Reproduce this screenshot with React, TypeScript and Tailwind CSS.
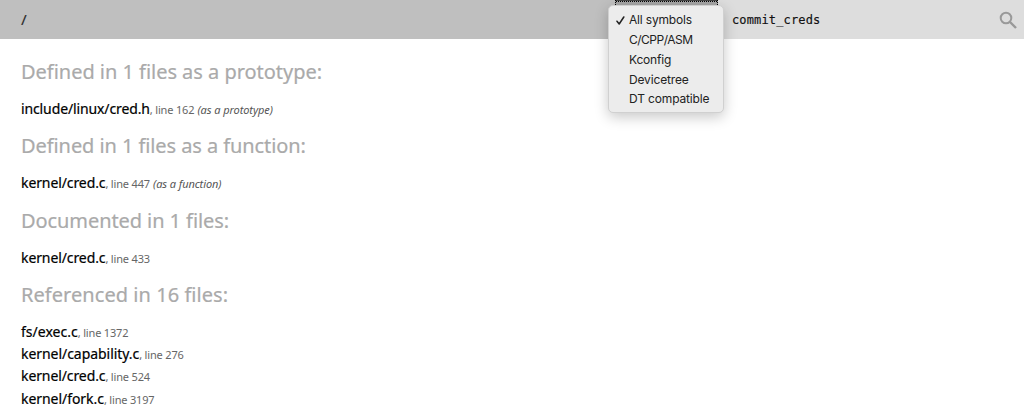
type Row = { path: string; line: string; note?: string; track: string };
type Section = { title: string; track: string; rows: Row[] };

const sections: Section[] = [
  { title: "Defined in 1 files as a prototype:", track: "tracking-[-0.03px]", rows: [{ path: "include/linux/cred.h", line: "162", note: "(as a prototype)", track: "tracking-[-0.12px]" }] },
  { title: "Defined in 1 files as a function:", track: "tracking-[-0.08px]", rows: [{ path: "kernel/cred.c", line: "447", note: "(as a function)", track: "tracking-[-0.1px]" }] },
  { title: "Documented in 1 files:", track: "tracking-[-0.08px]", rows: [{ path: "kernel/cred.c", line: "433", track: "tracking-[-0.1px]" }] },
  {
    title: "Referenced in 16 files:",
    track: "tracking-[0.05px]",
    rows: [
      { path: "fs/exec.c", line: "1372", track: "tracking-[0.02px]" },
      { path: "kernel/capability.c", line: "276", track: "tracking-[-0.05px]" },
      { path: "kernel/cred.c", line: "524", track: "tracking-[-0.1px]" },
      { path: "kernel/fork.c", line: "3197", track: "tracking-[-0.05px]" },
    ],
  },
];

const options = [
  { label: "All symbols", track: "tracking-[-0.18px]" },
  { label: "C/CPP/ASM", track: "tracking-[-0.5px]" },
  { label: "Kconfig", track: "tracking-[-0.2px]" },
  { label: "Devicetree", track: "tracking-[-0.15px]" },
  { label: "DT compatible", track: "tracking-[-0.14px]" },
];

function SymbolMenu() {
  return (
    <ul className="absolute left-[608px] top-[5px] h-[108px] w-[116px] rounded-[5px] border border-[#d0d0d0] bg-[#ececec] pt-[4.3px] font-['Inter',sans-serif] text-[12px] text-[#222] shadow-[0_4px_14px_rgba(0,0,0,0.22)]">
      {options.map((o, i) => (
        <li key={o.label} className="flex h-[19.8px] items-center whitespace-nowrap">
          <span className="flex w-5 justify-center pl-[3px]">
            {i === 0 && (
              <svg width="9" height="9" viewBox="0 0 9 9" fill="none" stroke="#222" strokeWidth="1.5" strokeLinecap="round" strokeLinejoin="round">
                <path d="M1 5.2L3.2 8L7.8 1" />
              </svg>
            )}
          </span>
          <span className={o.track}>{o.label}</span>
        </li>
      ))}
    </ul>
  );
}

export default function App() {
  return (
    <div className="relative h-[410px] w-[1024px] overflow-hidden bg-white font-['Noto_Sans',sans-serif]">
      <header className="flex h-[39px]">
        <div className="flex w-[615px] items-center bg-[#bfbfbf] pl-[21px] text-[15px] font-medium text-[#333]">/</div>
        <div className="flex flex-1 items-center bg-[#ddd]">
          <div className="flex h-full w-[103px] flex-col border-x border-dotted border-black bg-[#a6a6a6]">
            <div className="h-px bg-[#444]" />
            <div className="border-t border-dotted border-black" />
          </div>
          <span className="ml-[14px] flex-1 font-['DejaVu_Sans_Mono',monospace] text-[12px] tracking-[0.14px] text-[#111] [-webkit-text-stroke:0.15px]">commit_creds</span>
          <svg className="mr-[7px]" width="18" height="18" viewBox="0 0 18 18" fill="none" stroke="#999">
            <circle cx="7" cy="7" r="5.3" strokeWidth="2" />
            <path d="M11 11L17 17" strokeWidth="2.4" />
          </svg>
        </div>
      </header>
      <main className="pl-[21px] pt-[17px]">
        {sections.map((s) => (
          <section key={s.title} className="mb-[10px]">
            <h2 className={`h-[42px] whitespace-nowrap text-[20px] leading-[32px] text-[#aaa] [-webkit-text-stroke:0.2px] ${s.track}`}>{s.title}</h2>
            <ul>
              {s.rows.map((r) => (
                <li key={r.path} className="h-[22.25px] whitespace-nowrap text-[11px] leading-[22.25px] tracking-[-0.18px] text-[#666]">
                  <span className={`text-[14px] text-black [-webkit-text-stroke:0.2px] ${r.track}`}>{r.path}</span>
                  <span>, line {r.line}</span> {r.note && <em className="ml-[0.5px] tracking-[-0.08px] text-[#555]">{r.note}</em>}
                </li>
              ))}
            </ul>
          </section>
        ))}
      </main>
      <SymbolMenu />
    </div>
  );
}
